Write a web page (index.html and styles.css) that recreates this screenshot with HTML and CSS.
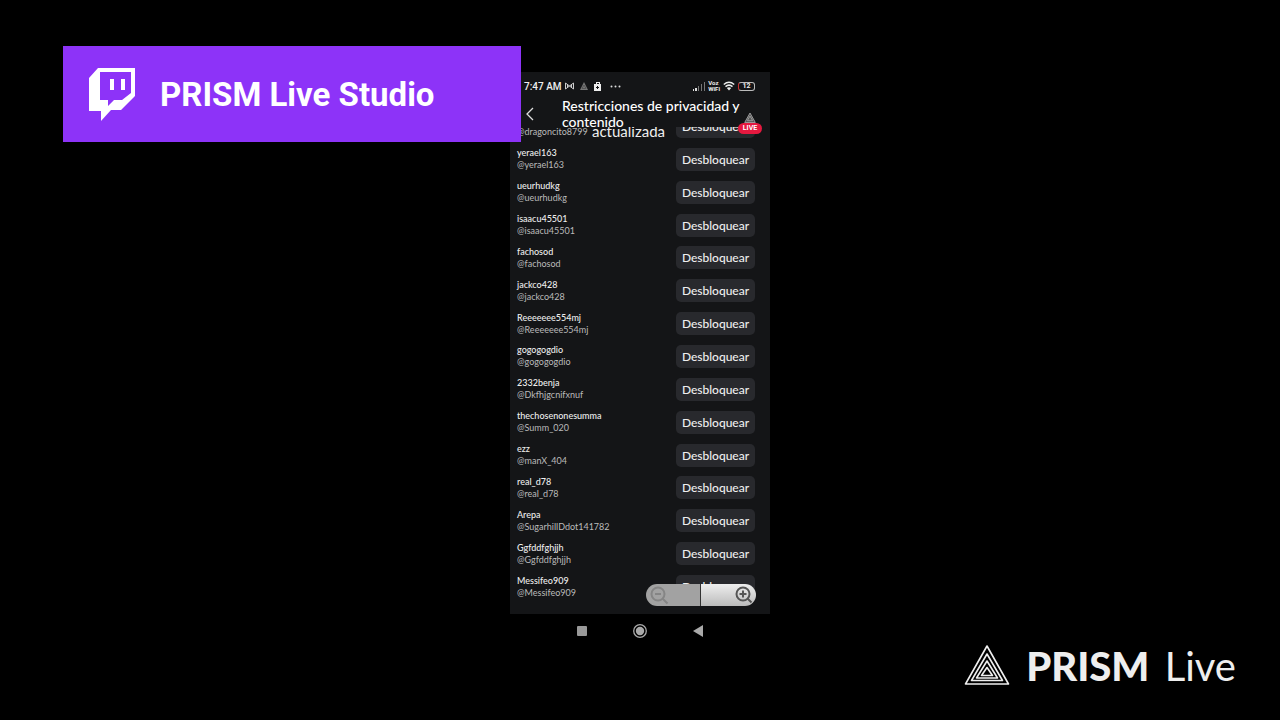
FILE: index.html
```html
<!DOCTYPE html>
<html lang="es">
<head>
  <meta charset="UTF-8">
  <meta name="viewport" content="width=device-width, initial-scale=1.0">
  <title>PRISM Live Studio</title>
  <link rel="stylesheet" href="styles.css">
</head>
<body>
  <div class="banner">
    <svg class="twitch" viewBox="0 0 48 54" aria-hidden="true">
      <path fill="#fff" fill-rule="evenodd" d="M10 1H47V29L33 43H23L13 54V44H1V11ZM12 5V33H20V39L26 33H34L43 26V5Z"/>
      <path fill="#fff" d="M22 12h4v11h-4zM33 12h4v11h-4z"/>
    </svg>
    <span>PRISM Live Studio</span>
  </div>

  <main class="phone">
    <div class="screen">
      <div class="status">
        <span class="clock">7:47 AM</span>
        <svg width="9" height="8" viewBox="0 0 9 8" fill="none" stroke="#ccc"><path d="M.5 7V1L4.500 4 8.500 1V7L4.500 4Z"/><path d="M2.500 2v4M6.500 2v4"/></svg>
        <svg class="gap" width="8" height="8" viewBox="0 0 8 8"><path fill="#777" d="M4 0 8 8H0z"/><path fill="none" stroke="#555" d="M4 3 6 6.500H2z"/></svg>
        <svg class="gap" width="8" height="9" viewBox="0 0 8 9"><path fill="#eee" d="M0 2h2V0h4v2h1v7H0z"/><path fill="#141517" d="M3 1h2v1H3zM3 4h1v1h1v1H4v1H3V6H2V5h1z"/></svg>
        <svg class="gap dots" width="11" height="3" viewBox="0 0 11 3" fill="#ddd"><circle cx="1.500" cy="1.500" r="1"/><circle cx="5.500" cy="1.500" r="1"/><circle cx="9.500" cy="1.500" r="1"/></svg>
        <span class="space"></span>
        <svg width="12" height="9" viewBox="0 0 12 9"><path fill="#ddd" d="M0 7h1v2H0zM2 6h2v3H2z"/><path fill="#777" d="M5 4h1v5H5zM8 2h1v7H8zM11 0h1v9h-1z"/></svg>
        <span class="vowifi">Voz<br>WiFi</span>
        <svg width="12" height="10" viewBox="0 0 12 10" fill="none" stroke="#eee" stroke-width="1.500"><path d="M.8 3.500Q6-1 11.200 3.500M2.500 5.600Q6 2.600 9.500 5.600"/><path fill="#eee" stroke="none" d="M3.800 7Q6 5.500 8.200 7L6 9.500z"/></svg>
        <span class="battery">12</span>
      </div>
      <header class="header">
        <button class="back" aria-label="Atrás"><svg width="8" height="14" viewBox="0 0 8 14" fill="none" stroke="#ddd" stroke-width="1.300"><path d="M7 1 1 7l6 6"/></svg></button>
        <h1>Restricciones de privacidad y contenido</h1>
      </header>
      <div class="viewport">
        <ul class="list" id="list"></ul>
        <span class="updated">actualizada</span>
      </div>
      <div class="live">
        <svg width="12" height="11" viewBox="0 0 12 11" fill="none" stroke="#999"><path fill="#555" d="M6 1 11.300 10.500H.7z"/><path d="M6 4 8.700 8.700H3.300z"/></svg>
        <span>LIVE</span>
      </div>
      <div class="zoom">
        <button aria-label="Alejar" disabled><svg width="19" height="19" viewBox="0 0 19 19" fill="none" stroke="#858585" stroke-width="2"><circle cx="8" cy="8" r="6.500"/><path d="M5 8h6M12.500 12.500l5 5"/></svg></button>
        <button aria-label="Acercar"><svg width="19" height="19" viewBox="0 0 19 19" fill="none" stroke="#555" stroke-width="2"><circle cx="8" cy="8" r="6.500"/><path d="M4.500 8h7M8 4.500v7M12.500 12.500l4 4"/></svg></button>
      </div>
    </div>
    <nav class="navbar">
      <button aria-label="Recientes"><svg width="14" height="14" viewBox="0 0 14 14"><rect x="2" y="2" width="10" height="10" rx="1" fill="#999"/></svg></button>
      <button aria-label="Inicio"><svg width="14" height="14" viewBox="0 0 14 14"><circle cx="7" cy="7" r="6.300" fill="none" stroke="#aaa" stroke-width="1.300"/><circle cx="7" cy="7" r="4.200" fill="#aaa"/></svg></button>
      <button aria-label="Volver"><svg width="14" height="14" viewBox="0 0 14 14"><path fill="#aaa" d="M2 7 12 1v12z"/></svg></button>
    </nav>
  </main>

  <div class="watermark">
    <svg width="46" height="42" viewBox="0 0 46 42" fill="none" stroke="#eee" stroke-width="1.600" stroke-linejoin="round" aria-hidden="true">
      <path d="M23 1 44.500 39H1.500z"/>
      <path d="M23 9 38.500 35.500H7.500z"/>
      <path d="M23 16 33.500 33H12.500z"/>
      <path d="M23 22.500 28.500 30.500H17.500z"/>
    </svg>
    <span><b>PRISM</b> Live</span>
  </div>

  <script>
    const users = [
      ['dragoncito8799', 'dragoncito8799'],
      ['yerael163', 'yerael163'],
      ['ueurhudkg', 'ueurhudkg'],
      ['isaacu45501', 'isaacu45501'],
      ['fachosod', 'fachosod'],
      ['jackco428', 'jackco428'],
      ['Reeeeeee554mj', 'Reeeeeee554mj'],
      ['gogogogdio', 'gogogogdio'],
      ['2332benja', 'Dkfhjgcnifxnuf'],
      ['thechosenonesumma', 'Summ_020'],
      ['ezz', 'manX_404'],
      ['real_d78', 'real_d78'],
      ['Arepa', 'SugarhillDdot141782'],
      ['Ggfddfghjjh', 'Ggfddfghjjh'],
      ['Messifeo909', 'Messifeo909']
    ];

    document.getElementById('list').innerHTML = users.map(([name, handle]) => `
      <li class="row">
        <div class="user"><div class="name">${name}</div><div class="handle">@${handle}</div></div>
        <button class="unblock">Desbloquear</button>
      </li>`).join('');
  </script>
</body>
</html>
```
FILE: styles.css
```css
* { box-sizing: border-box; }
body {
  margin: 0;
  min-height: 100vh;
  position: relative;
  background: #000;
  color: #eee;
  font-family: Lato, sans-serif;
  overflow: hidden;
}
button {
  border: 0;
  padding: 0;
  background: none;
  color: inherit;
  font: inherit;
}
svg { display: block; flex: none; }

/* stream overlays */
.banner {
  position: absolute;
  z-index: 2;
  left: 63px;
  top: 46px;
  width: 458px;
  height: 96px;
  padding-left: 25px;
  display: flex;
  align-items: center;
  gap: 24px;
  background: #8d33f8;
  color: #fff;
  font: bold 33px Roboto, sans-serif;
}
.twitch { width: 48px; height: 54px; }
.watermark {
  position: absolute;
  right: 44px;
  bottom: 29px;
  display: flex;
  align-items: center;
  gap: 16px;
  font: 40px/50px Lato, sans-serif;
}
.watermark b { font-weight: 900; margin-right: 5px; }

/* phone */
.phone { width: 260px; margin: 0 auto; padding-top: 72px; }
.screen {
  position: relative;
  height: 542px;
  background: #141517;
  display: flex;
  flex-direction: column;
}
.status {
  height: 28px;
  padding: 0 15px 0 14px;
  display: flex;
  align-items: center;
  gap: 3px;
}
.clock { font: 500 10px Roboto, sans-serif; }
.gap { margin-left: 3px; }
.dots { margin-left: 5px; }
.space { flex: 1; }
.vowifi { font: bold 6px/6px Roboto, sans-serif; }
.battery {
  width: 17px;
  border: 1px solid #bbb;
  border-left-color: #c33;
  border-radius: 3px;
  font: bold 7px/7px Roboto, sans-serif;
  text-align: center;
}
.header {
  height: 27px;
  padding-left: 16px;
  display: flex;
  align-items: center;
}
.back { width: 36px; }
h1 {
  margin: 0;
  width: 190px;
  font-size: 14px;
  line-height: 16px;
  font-weight: 500;
  color: #fff;
}
.viewport {
  position: relative;
  flex: 1;
  overflow: hidden;
}
.list {
  margin: -17px 0 0;
  padding: 0 15px 0 7px;
  height: 493px;
  list-style: none;
  display: grid;
  grid-auto-rows: 1fr;
}
.row { display: flex; align-items: center; justify-content: space-between; }
.name, .handle { font-size: 9px; line-height: 12px; }
.name { font-weight: 500; }
.handle { color: #bbb; }
.unblock {
  width: 79px;
  height: 23px;
  border-radius: 5px;
  background: #28292d;
  font-size: 12px;
  font-weight: 500;
}
.updated {
  position: absolute;
  left: 82px;
  top: -5px;
  font-size: 15px;
  line-height: 18px;
}
.live {
  position: absolute;
  right: 8px;
  top: 40px;
  display: flex;
  flex-direction: column;
  align-items: center;
}
.live span {
  width: 24px;
  border-radius: 6px;
  background: #e5193f;
  color: #fff;
  font: bold 7px/11px Roboto, sans-serif;
  text-align: center;
}
.zoom {
  position: absolute;
  right: 14px;
  bottom: 8px;
  width: 110px;
  height: 22px;
  border-radius: 11px;
  overflow: hidden;
  display: flex;
}
.zoom button {
  width: 50%;
  display: flex;
  align-items: center;
  padding: 0 4px;
  background: linear-gradient(#eee, #bbb);
}
.zoom button:first-child { background: #a2a2a2; border-right: 1px solid #333; }
.zoom button:last-child { justify-content: flex-end; padding: 0 2px; }
.navbar {
  height: 34px;
  display: flex;
  align-items: center;
  justify-content: center;
  gap: 44px;
}
```
